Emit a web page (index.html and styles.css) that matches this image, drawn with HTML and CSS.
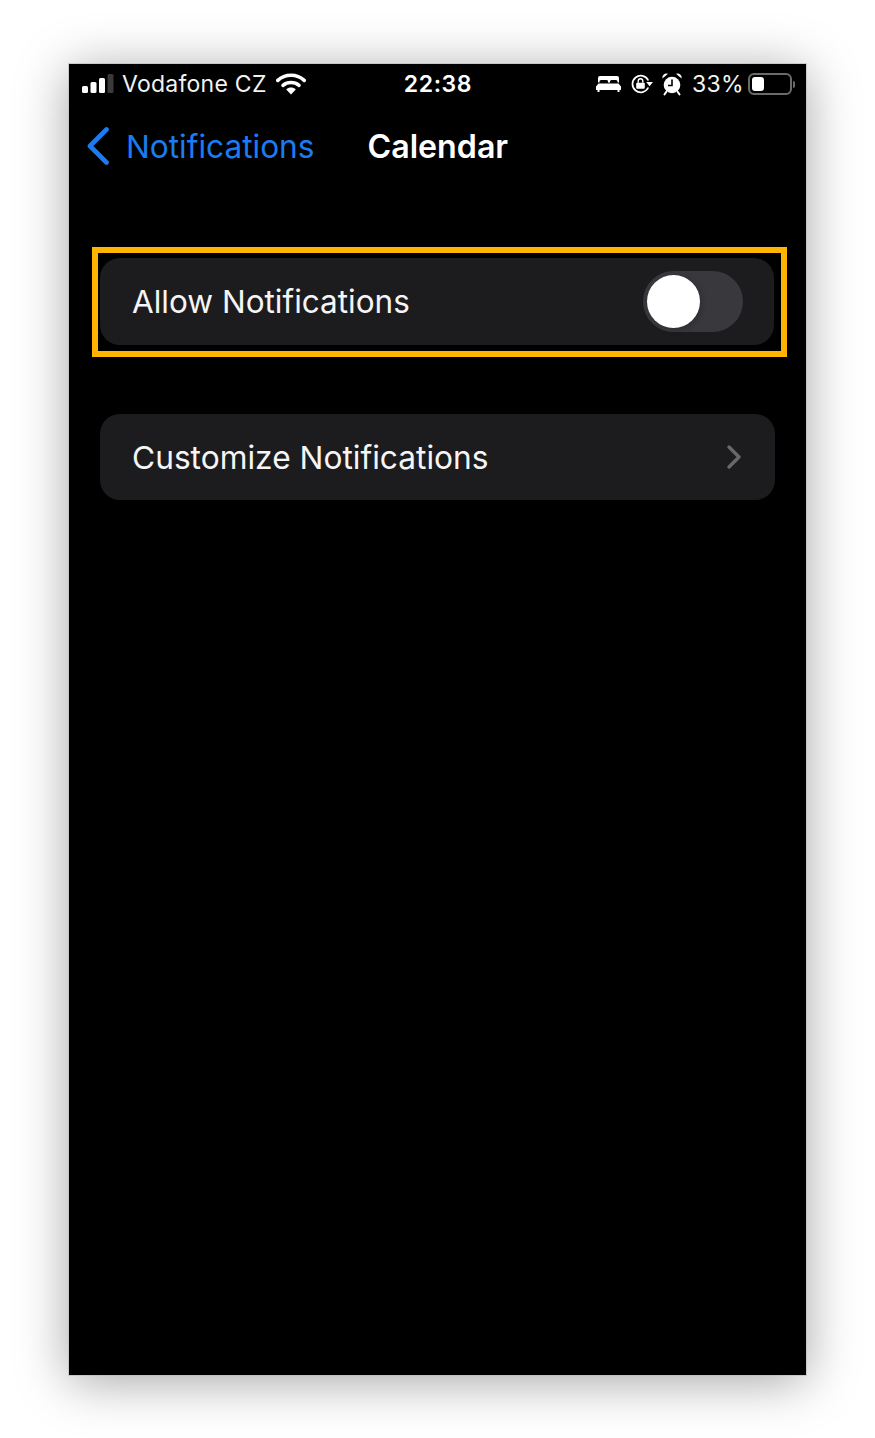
FILE: index.html
```html
<!DOCTYPE html>
<html lang="en">
<head>
<meta charset="utf-8">
<title>Calendar</title>
<link rel="stylesheet" href="styles.css">
</head>
<body>
<main class="screen">
  <header class="status">
    <div class="status-left">
      <svg class="signal" viewBox="0 0 32 20" width="32" height="20"><rect x="0" y="12" width="6" height="7" rx="1.5" fill="#fff"/><rect x="8.500" y="8" width="6" height="11" rx="1.500" fill="#fff"/><rect x="17" y="4" width="6" height="15" rx="1.500" fill="#fff"/><rect x="25.500" y="0" width="6" height="19" rx="1.500" fill="#3a3a3c"/></svg>
      <span class="carrier">Vodafone CZ</span>
      <svg class="wifi" viewBox="0 0 30 22" width="30" height="22"><path d="M1.800 7.400C9 .6 21 .6 28.200 7.400" fill="none" stroke="#fff" stroke-width="3.600" stroke-linecap="round"/><path d="M7 12.400C11.400 8.600 18.600 8.600 23 12.400" fill="none" stroke="#fff" stroke-width="3.600" stroke-linecap="round"/><path d="M10.200 16.400C13 14 17 14 19.800 16.400L15 21.600Z" fill="#fff"/></svg>
    </div>
    <time class="clock">22:38</time>
    <div class="status-right">
      <svg class="bed" viewBox="0 0 25 16" width="25" height="16"><path d="M4 0h17a2 2 0 0 1 2 2v4.500h-1.500V5.500a1.500 1.500 0 0 0-1.500-1.500h-4.500a1.500 1.500 0 0 0-1.500 1.500v1h-2v-1A1.500 1.500 0 0 0 10 4H5a1.500 1.500 0 0 0-1.500 1.500v1H2V2a2 2 0 0 1 2-2z" fill="#fff"/><path d="M2.500 7.500h20L25 10.500V14h-1.500v2H21.500v-2h-18v2H1.500v-2H0v-3.500z" fill="#fff"/></svg>
      <svg class="lock" viewBox="0 0 22 20" width="22" height="20"><path d="M17.300 13.500A8.300 8.300 0 1 1 17.300 6.500" fill="none" stroke="#fff" stroke-width="1.700"/><path d="M15.200 8h6.800l-3.400 4.300z" fill="#fff"/><rect x="5.200" y="8.700" width="8.600" height="6" rx="1" fill="#fff"/><path d="M7.200 8.700V7a2.300 2.300 0 0 1 4.600 0v1.700" fill="none" stroke="#fff" stroke-width="1.400"/></svg>
      <svg class="alarm" viewBox="0 0 22 24" width="22" height="24"><circle cx="11" cy="13" r="8.300" fill="#fff"/><path d="M11 7.500V13.500H7" fill="none" stroke="#000" stroke-width="1.600"/><path d="M1.500 6.500A4 4 0 0 1 7 1.800zM20.500 6.500A4 4 0 0 0 15 1.800z" fill="#fff"/><path d="M5.500 19.500L3.500 22.500M16.500 19.500L18.500 22.500" stroke="#fff" stroke-width="2" stroke-linecap="round"/></svg>
      <span class="percent">33%</span>
      <div class="battery"><span class="battery-level"></span></div>
      <span class="battery-cap"></span>
    </div>
  </header>

  <nav class="navbar">
    <a class="back">
      <svg class="back-chevron" viewBox="0 0 24 38" width="24" height="38"><path d="M20.500 2.500L4 19L20.500 35.500" fill="none" stroke="#1b7cf2" stroke-width="4.600" stroke-linecap="round" stroke-linejoin="round"/></svg>
      <span>Notifications</span>
    </a>
    <h1 class="title">Calendar</h1>
  </nav>

  <section class="highlight">
    <div class="card">
      <span class="label">Allow Notifications</span>
      <div class="toggle"><span class="knob"></span></div>
    </div>
  </section>

  <section class="card card-second">
    <span class="label label-wide">Customize Notifications</span>
    <svg class="chevron" viewBox="0 0 16 26" width="16" height="26"><path d="M3 3L13 13L3 23" fill="none" stroke="#68686c" stroke-width="3.400" stroke-linecap="round" stroke-linejoin="round"/></svg>
  </section>
</main>
</body>
</html>
```
FILE: styles.css
```css
* { box-sizing: border-box; }

html, body {
  margin: 0;
  height: 1438px;
  overflow: hidden;
  background: #fff;
}

body {
  padding: 64px 69px 0;
  font-family: Inter, "Liberation Sans", sans-serif;
}

.screen {
  width: 737px;
  height: 1311px;
  background: #000;
  color: #fff;
  box-shadow: 0 6px 48px rgba(0, 0, 0, .36);
  outline: 1px solid rgba(190, 190, 190, .7);
  display: flex;
  flex-direction: column;
}

.status {
  height: 40px;
  padding: 0 11px 0 13px;
  display: grid;
  grid-template-columns: 1fr auto 1fr;
  align-items: center;
}

.status-left, .status-right {
  display: flex;
  align-items: center;
}

.status-right { justify-content: flex-end; }

.carrier {
  margin-left: 8px;
  font-size: 23px;
  letter-spacing: .25px;
  color: #f2f2f2;
}

.wifi { margin-left: 9px; }

.clock {
  font-size: 23px;
  font-weight: 600;
  letter-spacing: .6px;
  margin-left: -1px;
}

.bed { margin-right: 10px; }
.lock { margin-right: 8px; }
.alarm { margin-right: 9px; }

.percent {
  font-size: 23px;
  letter-spacing: .3px;
  color: #f2f2f2;
  margin-right: 4px;
}

.battery {
  width: 44px;
  height: 22px;
  padding: 2px;
  border: 2px solid #6b6b6b;
  border-radius: 6px;
}

.battery-level {
  display: block;
  width: 12px;
  height: 100%;
  background: #fff;
  border-radius: 3px;
}

.battery-cap {
  width: 2px;
  height: 7px;
  margin-left: 1px;
  background: #6b6b6b;
  border-radius: 0 2px 2px 0;
}

.navbar {
  height: 44px;
  margin-top: 20px;
  padding: 0 17px;
  display: flex;
  align-items: center;
}

.back {
  display: flex;
  align-items: center;
  gap: 16px;
  color: #1b7cf2;
  font-size: 31.6px;
}

.title {
  margin: 0 0 0 53px;
  font-size: 32.2px;
  font-weight: 600;
}

.highlight {
  width: 695px;
  height: 110px;
  margin: 79px 0 0 23px;
  padding: 5px 7px 5px 2px;
  border: 6px solid #ffb400;
}

.card {
  height: 87px;
  padding: 0 31px 0 32px;
  background: #1c1c1e;
  border-radius: 20px;
  display: flex;
  align-items: center;
  justify-content: space-between;
}

.card-second {
  width: 675px;
  height: 86px;
  margin: 57px 0 0 31px;
  padding-right: 33px;
}

.label {
  font-size: 31.5px;
  color: #f5f5f5;
}

.label-wide { font-size: 31.7px; }

.toggle {
  width: 100px;
  height: 61px;
  padding: 4px;
  background: #39393d;
  border-radius: 31px;
}

.knob {
  display: block;
  width: 53px;
  height: 53px;
  border-radius: 50%;
  background: #fff;
  box-shadow: 2px 2px 6px rgba(0, 0, 0, .2);
}
```
